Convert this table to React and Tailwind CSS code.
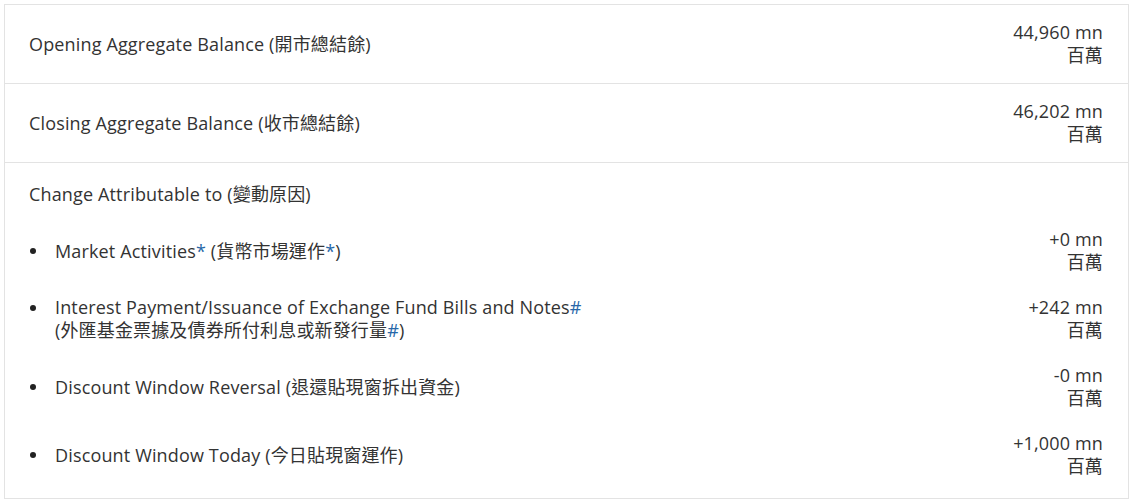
import React from "react";

const font = { fontFamily: '"Open Sans", "Noto Sans CJK TC", sans-serif' };

const Value = ({ v }) => (
  <div className="text-right shrink-0">
    <div>{v}</div>
    <div>百萬</div>
  </div>
);

const Star = ({ c }) => <span className="text-[#2767a8]">{c}</span>;

const items = [
  { label: <>Market Activities<Star c="*" /> (貨幣市場運作<Star c="*" />)</>, v: "+0 mn" },
  {
    label: (
      <>
        Interest Payment/Issuance of Exchange Fund Bills and Notes<Star c="#" />
        <br />
        (外匯基金票據及債券所付利息或新發行量<Star c="#" />)
      </>
    ),
    v: "+242 mn",
  },
  { label: "Discount Window Reversal (退還貼現窗拆出資金)", v: "-0 mn" },
  { label: "Discount Window Today (今日貼現窗運作)", v: "+1,000 mn" },
];

export default function App() {
  return (
    <div className="bg-white min-h-screen pt-1 pl-1" style={font}>
      <div className="w-[1125px] border border-[#e3e3e3] text-[18px] tracking-[0.15px] leading-[23px] text-[#333]">
        <div className="flex items-center justify-between pl-6 pr-[25px] py-4 border-b border-[#e3e3e3]">
          <div>Opening Aggregate Balance (開市總結餘)</div>
          <Value v="44,960 mn" />
        </div>
        <div className="flex items-center justify-between pl-6 pr-[25px] py-4 border-b border-[#e3e3e3]">
          <div>Closing Aggregate Balance (收市總結餘)</div>
          <Value v="46,202 mn" />
        </div>
        <div className="pl-6 pr-[25px] pt-5 pb-5">
          <div>Change Attributable to (變動原因)</div>
          <div className="flex flex-col gap-[22px] mt-[22px]">
            {items.map((it, i) => (
              <div key={i} className="flex items-center justify-between">
                <div className="flex items-start">
                  <span className="w-[26px] h-[23px] flex items-center pl-[1px]">
                    <span className="w-[6px] h-[6px] rounded-full bg-[#222]" />
                  </span>
                  <div>{it.label}</div>
                </div>
                <Value v={it.v} />
              </div>
            ))}
          </div>
        </div>
      </div>
    </div>
  );
}
